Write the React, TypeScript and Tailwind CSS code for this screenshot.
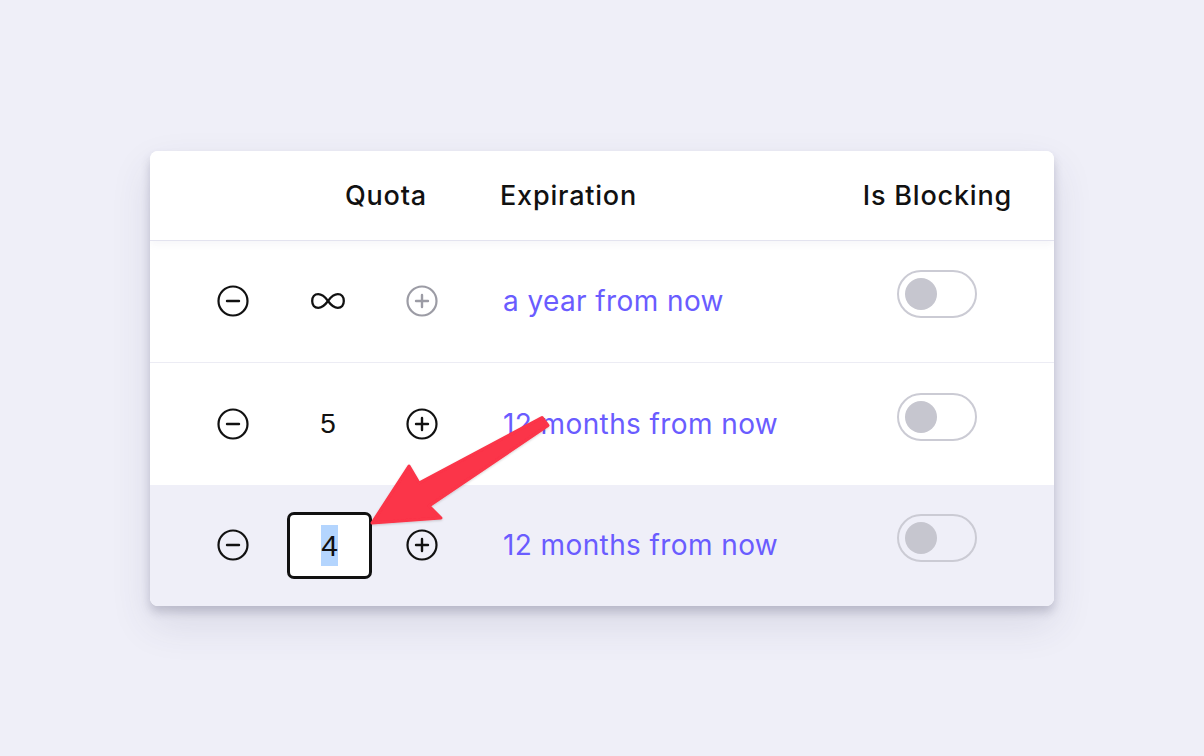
import React from "react";

const MinusIcon = ({ color = "#111111" }: { color?: string }) => (
  <svg width="32" height="32" viewBox="0 0 32 32" fill="none">
    <circle cx="16" cy="16" r="14.5" stroke={color} strokeWidth="2.2" />
    <line x1="10" y1="16" x2="22" y2="16" stroke={color} strokeWidth="2.4" strokeLinecap="round" />
  </svg>
);

const PlusIcon = ({ color = "#111111" }: { color?: string }) => (
  <svg width="32" height="32" viewBox="0 0 32 32" fill="none">
    <circle cx="16" cy="16" r="14.5" stroke={color} strokeWidth="2.2" />
    <line x1="10" y1="16" x2="22" y2="16" stroke={color} strokeWidth="2.4" strokeLinecap="round" />
    <line x1="16" y1="10" x2="16" y2="22" stroke={color} strokeWidth="2.4" strokeLinecap="round" />
  </svg>
);

const InfinityIcon = () => (
  <svg width="36" height="18" viewBox="0 0 36 18" fill="none">
    <path
      d="M18 9 C14 3.5 11 2.2 8.2 2.2 C4.4 2.2 2.2 5 2.2 9 C2.2 13 4.4 15.8 8.2 15.8 C11 15.8 14 14.5 18 9 C22 3.5 25 2.2 27.8 2.2 C31.6 2.2 33.8 5 33.8 9 C33.8 13 31.6 15.8 27.8 15.8 C25 15.8 22 14.5 18 9 Z"
      stroke="#111111"
      strokeWidth="2.3"
      strokeLinejoin="round"
    />
  </svg>
);

const Toggle = () => (
  <div className="mb-[14px] w-[80px] h-[48px] rounded-full border-2 border-[#cbcbd4] flex items-center pl-[6px]">
    <div className="w-[32px] h-[32px] rounded-full bg-[#c6c6cf]" />
  </div>
);

const expClass = "text-[28px] text-[#6a5cff] tracking-[0.4px] leading-none";
const headClass = "text-[27px] font-medium text-[#111] tracking-[0.8px] leading-none";

export default function App() {
  return (
    <div
      className="relative w-[1204px] h-[756px] bg-[#efeff8] flex items-center justify-center"
      style={{ fontFamily: "Inter, 'Noto Sans', sans-serif" }}
    >
      <div className="w-[904px] h-[455px] rounded-[8px] bg-white overflow-hidden flex flex-col shadow-[0_6px_10px_rgba(60,60,90,0.22),0_18px_40px_rgba(60,60,100,0.12)]">
        {/* Header */}
        <div className="relative z-10 h-[90px] shrink-0 flex items-center border-b border-[#e3e3ef] shadow-[0_3px_8px_rgba(80,80,140,0.06)] bg-white">
          <div className={"w-[277px] text-right " + headClass}>Quota</div>
          <div className={"ml-[73px] " + headClass}>Expiration</div>
          <div className="flex-1" />
          <div className={"mr-[42px] " + headClass}>Is Blocking</div>
        </div>

        {/* Row 1 */}
        <div className="h-[122px] shrink-0 flex items-center border-b border-[#ececf4] bg-white">
          <div className="ml-[67px] w-[32px] flex justify-center">
            <MinusIcon />
          </div>
          <div className="ml-[36px] w-[86px] flex justify-center">
            <InfinityIcon />
          </div>
          <div className="ml-[35px] w-[32px] flex justify-center">
            <PlusIcon color="#9c9ca5" />
          </div>
          <div className={"ml-[65px] w-[394px] " + expClass}>a year from now</div>
          <Toggle />
        </div>

        {/* Row 2 */}
        <div className="h-[122px] shrink-0 flex items-center bg-white">
          <div className="ml-[67px] w-[32px] flex justify-center">
            <MinusIcon />
          </div>
          <div
            className="ml-[36px] w-[86px] flex justify-center text-[28px] text-[#111] leading-none"
            style={{ fontFamily: "'Liberation Sans', Arial, sans-serif" }}
          >
            5
          </div>
          <div className="ml-[35px] w-[32px] flex justify-center">
            <PlusIcon />
          </div>
          <div className={"ml-[65px] w-[394px] " + expClass}>12 months from now</div>
          <Toggle />
        </div>

        {/* Row 3 */}
        <div className="flex-1 flex items-center bg-[#efeff8]">
          <div className="ml-[67px] w-[32px] flex justify-center">
            <MinusIcon />
          </div>
          <div className="ml-[38px] w-[85px] h-[67px] rounded-[7px] border-[3px] border-[#111] bg-white flex items-center justify-center">
            <span
              className="bg-[#b4d5fe] text-[30px] text-[#111] leading-[41px]"
              style={{ fontFamily: "'Liberation Sans', Arial, sans-serif" }}
            >
              4
            </span>
          </div>
          <div className="ml-[34px] w-[32px] flex justify-center">
            <PlusIcon />
          </div>
          <div className={"ml-[65px] w-[394px] " + expClass}>12 months from now</div>
          <Toggle />
        </div>
      </div>

      {/* Annotation arrow overlay */}
      <svg
        className="absolute left-0 top-0 pointer-events-none"
        width="1204"
        height="756"
        viewBox="0 0 1204 756"
      >
        <defs>
          <filter id="ash" x="-20%" y="-20%" width="140%" height="140%">
            <feDropShadow dx="0" dy="1" stdDeviation="1.2" floodColor="#000" floodOpacity="0.18" />
          </filter>
        </defs>
        <polygon
          filter="url(#ash)"
          points="542,417.5 419,483 409,466 372,523 441,518 429,506 548,425.5"
          fill="#fb3448"
          stroke="#fb3448"
          strokeWidth="3"
          strokeLinejoin="round"
        />
      </svg>
    </div>
  );
}
